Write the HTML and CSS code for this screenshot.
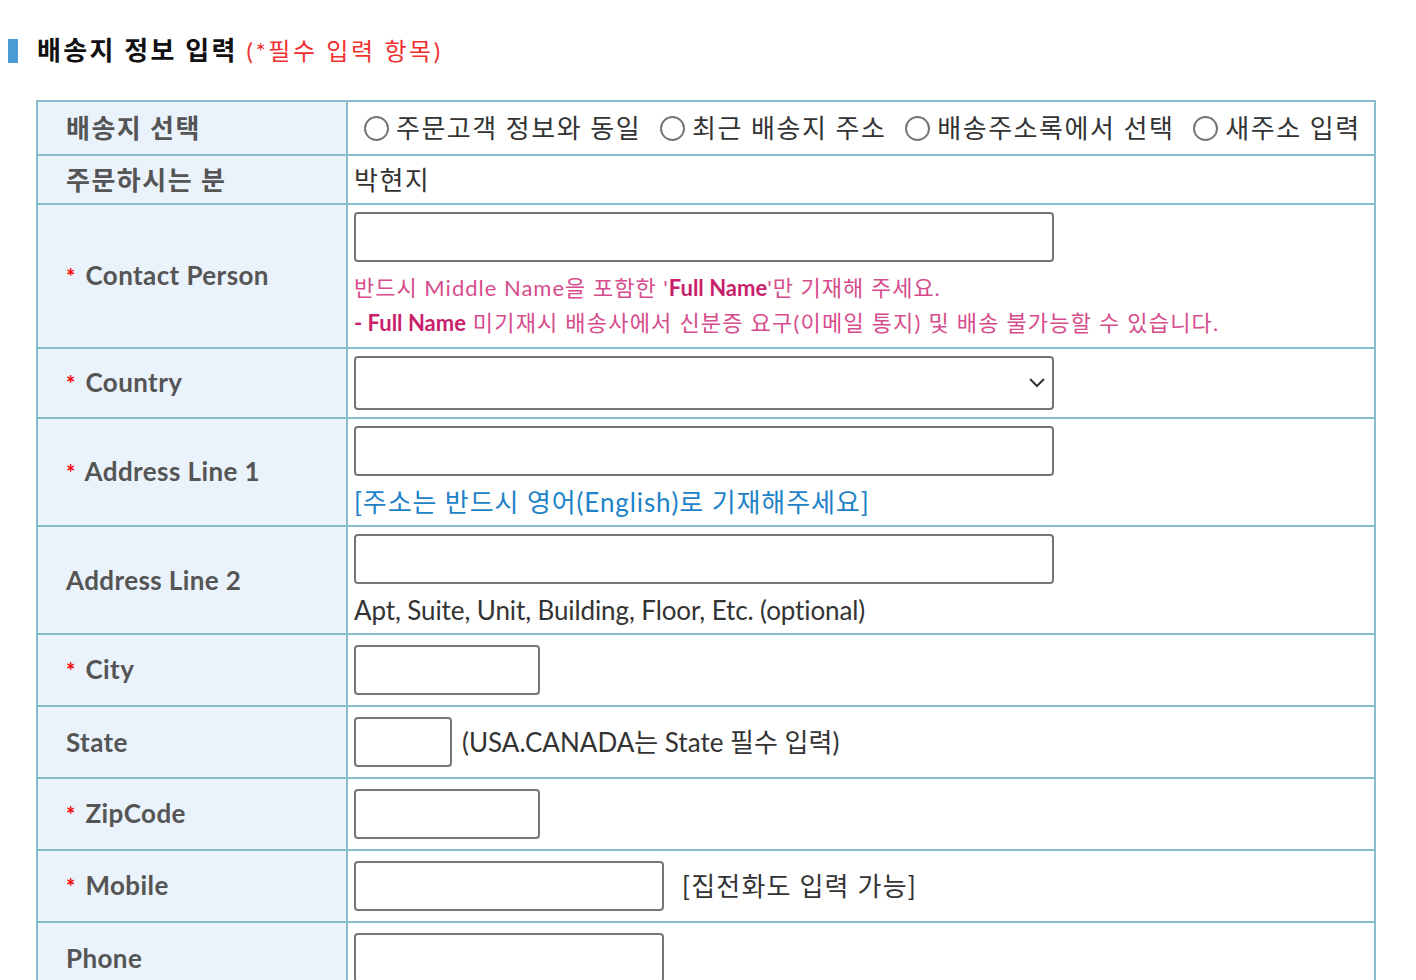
FILE: index.html
```html
<!DOCTYPE html>
<html lang="ko">

<head>
    <meta charset="UTF-8">
    <meta name="viewport" content="width=device-width, initial-scale=1.0">
    <title>배송지 정보 입력</title>
    <link rel="stylesheet" href="styles.css">
</head>

<body>
    <div class="page">
        <!-- Section title -->
        <h2 class="section-title">
            <span class="title-bar"></span>배송지 정보 입력 <span class="title-note">(*필수 입력 항목)</span>
        </h2>

        <!-- Shipping form -->
        <table class="ship-form">
            <tr class="row-choice">
                <th class="ko">배송지 선택</th>
                <td>
                    <div class="choices ko">
                        <label><input type="radio" name="addrType">주문고객 정보와 동일</label>
                        <label><input type="radio" name="addrType">최근 배송지 주소</label>
                        <label><input type="radio" name="addrType">배송주소록에서 선택</label>
                        <label><input type="radio" name="addrType">새주소 입력</label>
                    </div>
                </td>
            </tr>
            <tr class="row-name">
                <th class="ko">주문하시는 분</th>
                <td class="ko">박현지</td>
            </tr>
            <tr>
                <th><span class="req">*</span> Contact Person</th>
                <td>
                    <input type="text" class="field field-wide">
                    <p class="notice">반드시 Middle Name을 포함한 '<b>Full Name</b>'만 기재해 주세요.</p>
                    <p class="notice"><b>- Full Name</b> 미기재시 배송사에서 신분증 요구(이메일 통지) 및 배송 불가능할 수 있습니다.</p>
                </td>
            </tr>
            <tr class="row-country">
                <th><span class="req">*</span> Country</th>
                <td>
                    <div class="select-wrap">
                        <select class="field field-wide field-select"></select>
                        <svg class="chevron" width="18" height="12" viewBox="0 0 18 12">
                            <path d="M2 2 L9 9 L16 2" fill="none" stroke="#333" stroke-width="2"/>
                        </svg>
                    </div>
                </td>
            </tr>
            <tr>
                <th><span class="req">*</span> Address Line 1</th>
                <td>
                    <input type="text" class="field field-wide">
                    <p class="hint hint-blue">[주소는 반드시 영어(English)로 기재해주세요]</p>
                </td>
            </tr>
            <tr>
                <th>Address Line 2</th>
                <td>
                    <input type="text" class="field field-wide">
                    <p class="hint">Apt, Suite, Unit, Building, Floor, Etc. (optional)</p>
                </td>
            </tr>
            <tr class="row-short">
                <th><span class="req">*</span> City</th>
                <td><input type="text" class="field field-mid"></td>
            </tr>
            <tr class="row-short">
                <th>State</th>
                <td>
                    <div class="inline">
                        <input type="text" class="field field-small">
                        <span>(USA.CANADA는 State 필수 입력)</span>
                    </div>
                </td>
            </tr>
            <tr class="row-short">
                <th><span class="req">*</span> ZipCode</th>
                <td><input type="text" class="field field-mid"></td>
            </tr>
            <tr class="row-short">
                <th><span class="req">*</span> Mobile</th>
                <td>
                    <div class="inline">
                        <input type="text" class="field field-phone">
                        <span class="phone-note ko">[집전화도 입력 가능]</span>
                    </div>
                </td>
            </tr>
            <tr class="row-short">
                <th>Phone</th>
                <td><input type="text" class="field field-phone"></td>
            </tr>
        </table>
    </div>
</body>

</html>
```

FILE: styles.css
```css
/* Global reset */
* {
    box-sizing: border-box;
    margin: 0;
    padding: 0;
}

body {
    font-family: Lato, "Noto Sans CJK KR", sans-serif;
    color: #333;
    background: #fff;
}

.page {
    padding: 26px 0 0 8px;
}

/* Korean-heavy text runs a little wider */
.ko {
    letter-spacing: 1.5px;
}

/* Title */
.section-title {
    font-size: 26px;
    font-weight: bold;
    color: #111;
    height: 48px;
    line-height: 48px;
    letter-spacing: 2.3px;
}

.title-bar {
    display: inline-block;
    width: 10px;
    height: 24px;
    background-color: #4d9bd6;
    margin-right: 19px;
    vertical-align: -3px;
}

.title-note {
    font-size: 24px;
    font-weight: normal;
    color: #f0302f;
    letter-spacing: 2.6px;
}

/* Form table */
.ship-form {
    margin: 26px 0 0 28px;
    width: 1340px;
    border-collapse: collapse;
    border: 2px solid #86bccb;
}

.ship-form th,
.ship-form td {
    border: 2px solid #86bccb;
    font-size: 26px;
    line-height: 34px;
    text-align: left;
    vertical-align: middle;
}

.ship-form th {
    width: 310px;
    background-color: #eaf3fb;
    color: #555;
    font-weight: bold;
    padding-left: 28px;
    letter-spacing: 0.4px;
}

.ship-form th.ko {
    letter-spacing: 1.5px;
}

.ship-form td {
    padding: 7px 6px;
    background: #fff;
}

.row-choice th,
.row-choice td {
    height: 54px;
}

.ship-form .row-name th,
.ship-form .row-name td {
    height: 49px;
    padding-top: 6px;
    padding-bottom: 6px;
}

.row-country th,
.row-country td {
    height: 70px;
}

.row-short th,
.row-short td {
    height: 72px;
}

.req {
    color: #f00;
    font-size: 22px;
    margin-right: 3px;
}

/* Radios */
.choices {
    display: flex;
    gap: 19px;
    padding-left: 10px;
    white-space: nowrap;
}

.choices label {
    display: flex;
    align-items: center;
    gap: 7px;
}

.choices input {
    appearance: none;
    width: 25px;
    height: 25px;
    border: 2px solid #767676;
    border-radius: 50%;
    background: #fff;
}

/* Inputs */
.field {
    display: block;
    height: 50px;
    border: 2px solid #767676;
    border-radius: 4px;
    background: #fff;
    font-size: 26px;
}

.field-wide {
    width: 700px;
}

.field-mid {
    width: 186px;
}

.field-small {
    width: 98px;
}

.field-phone {
    width: 310px;
}

.select-wrap {
    position: relative;
    width: 700px;
}

.field-select {
    height: 54px;
    appearance: none;
}

.chevron {
    position: absolute;
    right: 8px;
    top: 21px;
}

.notice {
    font-size: 22px;
    color: #d64c8c;
    line-height: 35px;
    letter-spacing: 1.2px;
}

.notice:first-of-type {
    margin-top: 8px;
    letter-spacing: 1px;
}

.notice b {
    color: #c81f6c;
    letter-spacing: 0;
}

.hint {
    line-height: 36px;
    margin-top: 8px;
    margin-bottom: -2px;
    letter-spacing: -0.1px;
}

.hint-blue {
    color: #1e82c8;
    letter-spacing: 0.9px;
}

.inline {
    display: flex;
    align-items: center;
    gap: 10px;
    white-space: nowrap;
}

.inline span {
    letter-spacing: 0;
}

.inline span.ko {
    letter-spacing: 1.2px;
}

.phone-note {
    margin-left: 8px;
}
```
